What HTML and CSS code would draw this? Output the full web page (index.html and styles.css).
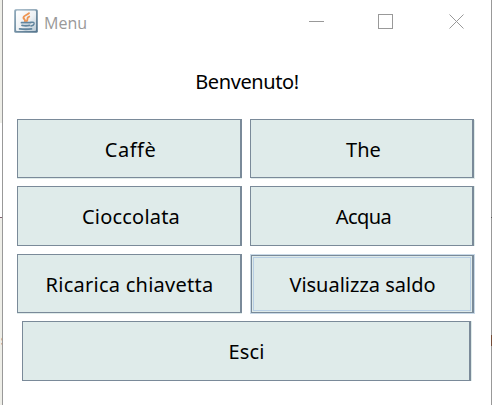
FILE: index.html
```html
<!DOCTYPE html>
<html lang="it">
<head>
<meta charset="utf-8">
<title>Menu</title>
<link rel="stylesheet" href="styles.css">
</head>
<body>
<div class="desktop">
<div class="backdrop"><i class="line"></i><b class="behind">s</b></div>
<main class="window">
  <header class="titlebar">
    <svg class="java" width="24" height="24" viewBox="0 0 24 24">
      <defs>
        <linearGradient id="frame" x1="0" y1="0" x2="1" y2="1"><stop offset="0" stop-color="#91abbc"/><stop offset="1" stop-color="#54748c"/></linearGradient>
        <linearGradient id="face" x1="0" y1="0" x2="1" y2="1"><stop offset="0" stop-color="#fff"/><stop offset=".55" stop-color="#edf1f4"/><stop offset="1" stop-color="#b9c9d4"/></linearGradient>
      </defs>
      <rect x=".2" y=".2" width="23.6" height="23.6" rx="1.5" fill="url(#frame)"/>
      <rect x="2" y="1.6" width="20" height="20.4" rx="1" fill="url(#face)"/>
      <g fill="none" stroke-linecap="round">
        <path d="M15 4.2C13 6.2 9.200 6.500 9.500 8.800C9.700 10.200 11.500 10.600 11 12.300M15.200 7.600C11.800 8.800 14.600 10.200 12.800 12" stroke="#ee9552" stroke-width="1.900"/>
        <path d="M7.500 13.700H16.500M8 16.300Q12 17.200 15.500 16.300M5.600 19.800Q12 20.700 17.500 19.800" stroke="#61859e" stroke-width="1.800"/>
        <path d="M17 13.300Q20.600 12.700 20 15Q19.500 16.700 17 17" stroke="#61859e" stroke-width="1.500"/>
      </g>
    </svg>
    <h1 class="title">Menu</h1>
    <svg class="controls" width="156" height="16" viewBox="0 0 156 16" fill="none" stroke="#999">
      <path d="M0 7.500H15M69.500 .5H83.500V14.500H69.500Z" shape-rendering="crispEdges"/>
      <path d="M140.500 .5L154.500 14.500M154.500 .5L140.500 14.500"/>
    </svg>
  </header>
  <p class="welcome"><span class="w-welcome">Benvenuto!</span></p>
  <div class="grid">
    <button class="btn short"><span class="w-coffee">Caffè</span></button>
    <button class="btn right short"><span class="w-tea">The</span></button>
    <button class="btn"><span class="w-choc">Cioccolata</span></button>
    <button class="btn right"><span class="w-water">Acqua</span></button>
    <button class="btn short"><span class="w-key">Ricarica chiavetta</span></button>
    <button class="btn focused"><span class="w-balance">Visualizza saldo</span></button>
  </div>
  <button class="btn exit"><span class="w-exit">Esci</span></button>
</main>
<div class="edge"></div>
</div>
</body>
</html>
```
FILE: styles.css
```css
* { box-sizing: border-box; }
body { margin: 0; background: #fff; font-family: "Noto Sans", sans-serif; color: #000; overflow: hidden; }
.desktop { display: grid; grid-template-columns: 2px 489px 1px; width: 492px; height: 405px; }
.backdrop { position: relative; background: linear-gradient(#eeeee8 0 123px, #fff 123px 217px, #eeeee8 217px); overflow: hidden; }
.line { position: absolute; top: 217px; left: 0; width: 2px; height: 1px; background: #806070; }
.behind { position: absolute; top: 332px; left: 1px; font-size: 14px; line-height: 16px; color: #234c82; }
.window { border-left: 1px solid #999; background: #fff; }
.edge { background: linear-gradient(#999 0 217px, #555 217px 218px, #999 218px 335px, #744c38 335px 346px, #999 346px); }
.titlebar { display: flex; height: 48px; padding: 9px 0 0 11px; }
.java { flex: none; }
.title { margin: 0 0 0 6px; width: 265px; font: 400 16px/28px "Open Sans", sans-serif; color: #999; }
.controls { flex: none; margin-top: 5px; }
.welcome { margin: 0; height: 71px; padding-top: 19px; text-align: center; font-size: 20px; line-height: 30px; }
.grid { display: grid; grid-template-columns: 225px 225px; grid-template-rows: 67px 68px 67px; column-gap: 8px; padding-left: 14px; }
.btn { display: flex; align-items: center; justify-content: center; margin: 0; padding: 2px 0 0; height: 60px; background: #dfebea; border: 1px solid #7a8a99; border-right-width: 2px; font-family: inherit; font-size: 20px; line-height: 30px; color: #000; }
.btn span, .welcome span { display: inline-block; white-space: nowrap; }
.short { height: 59px; box-shadow: 0 1px #dfebea; }
.right { width: 224px; box-shadow: 1px 0 #dfebea; }
.right.short { box-shadow: 1px 1px #dfebea; }
.focused { border: 1px solid #c8d9e7; box-shadow: inset 1px 1px #7a8a99, inset -2px -1px #7a8a99, inset 2px 2px #dfebea, inset -3px -2px #dfebea, inset 3px 3px #b8cfe5, inset -4px -3px #b8cfe5; }
.exit { margin-left: 19px; width: 449px; box-shadow: 1px 0 #dfebea; }
.w-welcome { letter-spacing: -.4px; }
.w-coffee { letter-spacing: .5px; padding-left: 3px; }
.w-tea { padding-left: 4px; }
.w-choc { letter-spacing: .2px; padding-left: 4px; }
.w-water { letter-spacing: -.6px; padding-left: 4px; }
.w-key { letter-spacing: .25px; padding-left: 1px; }
.w-exit { letter-spacing: .1px; padding-left: 1px; }
```
